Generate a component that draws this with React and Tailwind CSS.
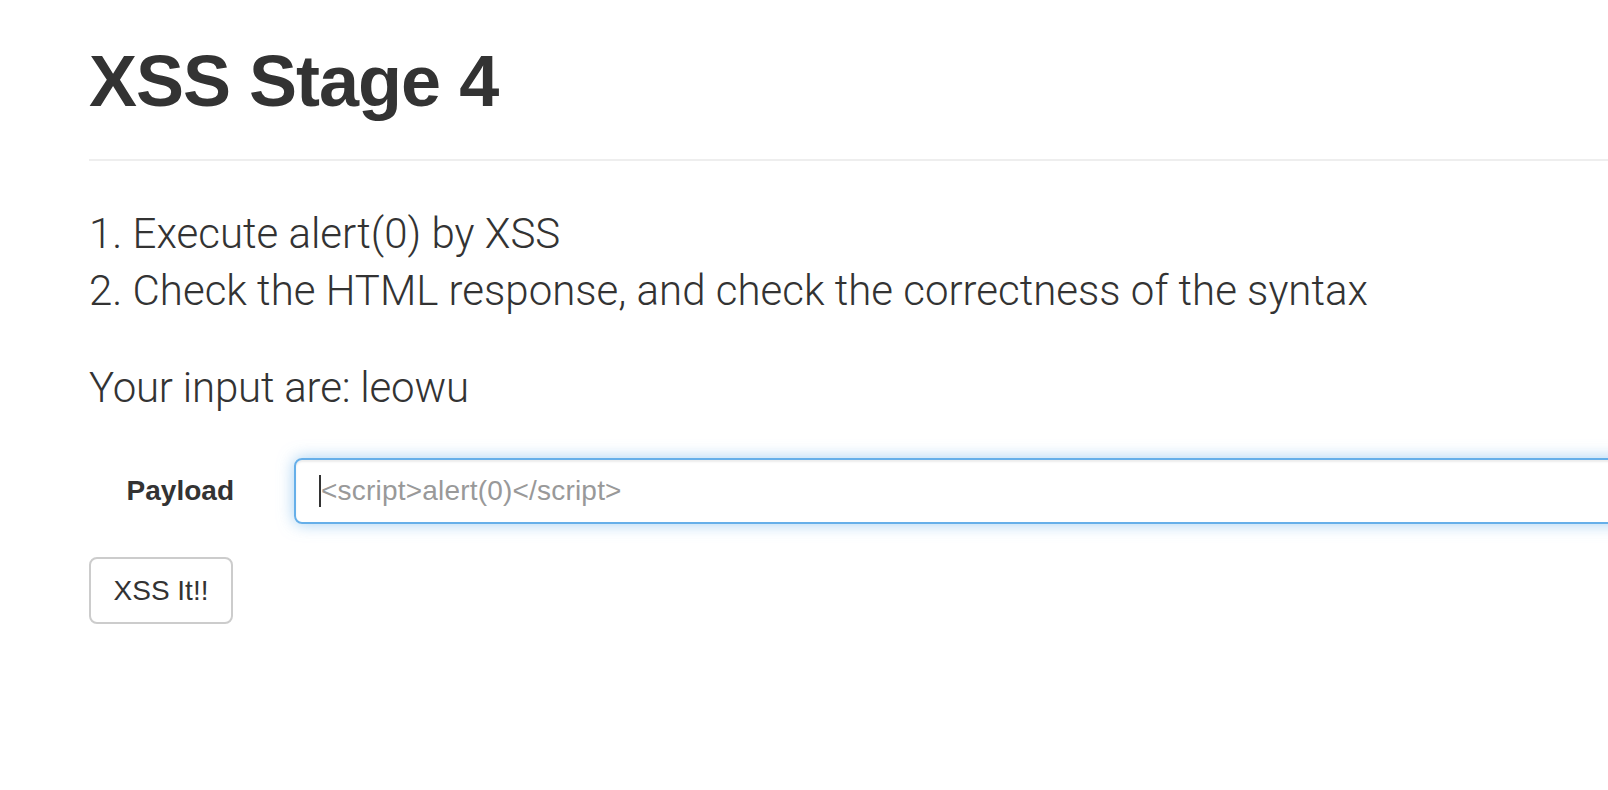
export default function App() {
  return (
    <div className="w-[1608px] h-[790px] overflow-hidden bg-white text-[#333]" style={{ fontFamily: '"Liberation Sans", Arial, sans-serif' }}>
      <div className="pl-[89px]">
        <h1 className="pt-[42px] text-[72px] leading-[79px] font-bold tracking-[-1px]">XSS Stage 4</h1>
        <div className="mt-[38px] h-[2px] bg-[#eee]" />
        <div className="mt-[44px] text-[42px] leading-[57px] font-light" style={{ fontFamily: 'Roboto, "Liberation Sans", sans-serif' }}>
          <p>1. Execute alert(0) by XSS</p>
          <p>2. Check the HTML response, and check the correctness of the syntax</p>
        </div>
        <p className="mt-[40px] text-[42px] leading-[57px] font-light tracking-[-0.2px]" style={{ fontFamily: 'Roboto, "Liberation Sans", sans-serif' }}>Your input are: leowu</p>
        <div className="mt-[42px] flex items-center">
          <label className="w-[145px] shrink-0 text-right text-[28px] font-bold">Payload</label>
          <div className="ml-[60px] w-[1400px] shrink-0 h-[66px] rounded-[8px] border-2 border-[#66afe9] flex items-center pl-[25px] shadow-[inset_0_2px_2px_rgba(0,0,0,0.075),0_0_16px_rgba(102,175,233,0.6)]">
            <span className="w-[2px] h-[32px] bg-[#333] -ml-[2px]" />
            <span className="text-[28px] text-[#999] tracking-[0.2px]">&lt;script&gt;alert(0)&lt;/script&gt;</span>
          </div>
        </div>
        <button className="mt-[33px] w-[144px] h-[67px] rounded-[8px] border-2 border-[#ccc] bg-white text-[28px] text-[#333]">XSS It!!</button>
      </div>
    </div>
  );
}
